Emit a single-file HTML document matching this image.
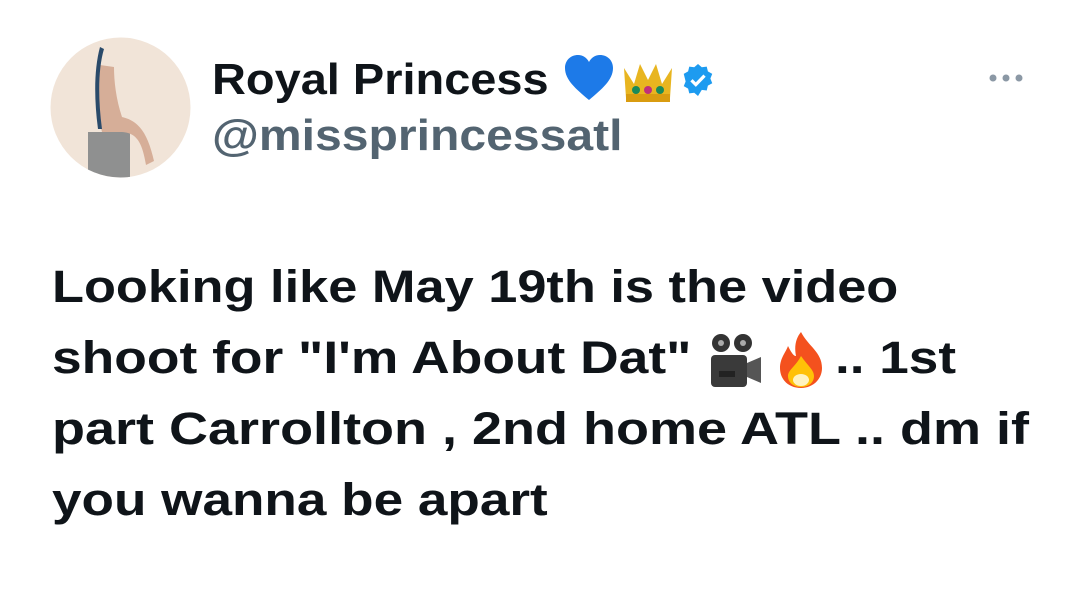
<!DOCTYPE html>
<html><head><meta charset="utf-8"><style>
html,body{margin:0;padding:0;background:#fff;width:1080px;height:602px;overflow:hidden;position:relative;font-family:"Liberation Sans",sans-serif;}
.t{position:absolute;white-space:nowrap;font-weight:bold;line-height:1;color:#0f1419;transform-origin:0 0;}
.b{font-size:45px;left:52px;}
</style></head><body>
<svg style="position:absolute;left:50px;top:37px" width="141" height="141">
<defs><clipPath id="c"><circle cx="70.5" cy="70.5" r="70"/></clipPath></defs>
<g clip-path="url(#c)">
<rect width="141" height="141" fill="#f1e4d8"/>
<rect x="38" y="95" width="42" height="50" fill="#8f9090"/>
<path d="M50 28 C46 48 46 72 52 95 L72 95 C86 96 92 104 96 128 L104 124 C98 98 90 84 72 80 C66 62 64 44 64 30 Z" fill="#d6ae98"/>
<path d="M50 10 C44 32 44 62 48 92 L52 92 C48 62 48 32 54 12 Z" fill="#2a4a6a"/>
</g></svg>
<div class="t" style="left:212px;top:58px;font-size:44px;transform:scaleX(1.067)">Royal Princess</div>
<svg style="position:absolute;left:564px;top:55px" width="50" height="46" viewBox="0 0 50 46"><path d="M25 45 C12 34 1 25 1 13 C1 5 7 0 14 0 C19 0 23 3 25 7 C27 3 31 0 36 0 C43 0 49 5 49 13 C49 25 38 34 25 45Z" fill="#1d7ae8"/></svg>
<svg style="position:absolute;left:620px;top:60px" width="56" height="44" viewBox="0 0 56 44"><path d="M4 8 L14 24 L20 4 L28 20 L36 4 L42 24 L52 8 L50 38 L6 38Z" fill="#e8b520"/><rect x="6" y="34" width="44" height="8" fill="#d99c10"/><circle cx="16" cy="30" r="4" fill="#1a8a5a"/><circle cx="28" cy="30" r="4" fill="#c0307a"/><circle cx="40" cy="30" r="4" fill="#1a8a5a"/></svg>
<svg style="position:absolute;left:682px;top:64px" width="32" height="32" viewBox="0 0 22 22"><path d="M11 0l2.6 2.2 3.4-.4.8 3.3 3 1.7-1.3 3.2 1.3 3.2-3 1.7-.8 3.3-3.4-.4L11 22l-2.6-2.2-3.4.4-.8-3.3-3-1.7 1.3-3.2L1.2 6.8l3-1.7.8-3.3 3.4.4Z" fill="#1d9bf0"/><path d="M6.5 11.2l3 3 6-6.2" stroke="#fff" stroke-width="2.2" fill="none"/></svg>
<div class="t" style="left:212px;top:114px;font-size:44px;color:#536471;transform:scaleX(1.093)">@missprincessatl</div>
<svg style="position:absolute;left:988px;top:73px" width="40" height="10"><circle cx="5" cy="5" r="3.5" fill="#8b98a5"/><circle cx="18" cy="5" r="3.5" fill="#8b98a5"/><circle cx="31" cy="5" r="3.5" fill="#8b98a5"/></svg>
<div class="t b" style="top:264px;transform:scaleX(1.163)">Looking like May 19th is the video</div>
<div class="t b" style="top:335px;transform:scaleX(1.186)">shoot for "I'm About Dat"</div>
<svg style="position:absolute;left:705px;top:333px" width="58" height="55" viewBox="0 0 58 55"><circle cx="16" cy="10" r="9" fill="#333"/><circle cx="38" cy="10" r="9" fill="#333"/><circle cx="16" cy="10" r="3" fill="#aaa"/><circle cx="38" cy="10" r="3" fill="#aaa"/><rect x="6" y="22" width="36" height="32" rx="4" fill="#3a3a3a"/><path d="M42 30 L56 24 L56 50 L42 44Z" fill="#555"/><rect x="14" y="38" width="16" height="6" fill="#222"/></svg>
<svg style="position:absolute;left:778px;top:332px" width="46" height="56" viewBox="0 0 46 56"><path d="M23 0 C30 14 44 20 44 36 C44 48 34 56 23 56 C11 56 2 48 2 36 C2 26 8 20 10 14 C14 22 16 24 18 24 C16 14 18 6 23 0Z" fill="#f4511e"/><path d="M23 24 C30 34 36 38 36 44 C36 51 30 55 23 55 C16 55 10 51 10 44 C10 38 18 34 23 24Z" fill="#ffc107"/><ellipse cx="23" cy="48" rx="8" ry="6" fill="#fff3c0"/></svg>
<div class="t b" style="top:335px;left:835px;transform:scaleX(1.18)">.. 1st</div>
<div class="t b" style="top:406px;transform:scaleX(1.2)">part Carrollton , 2nd home ATL .. dm if</div>
<div class="t b" style="top:477px;transform:scaleX(1.18)">you wanna be apart</div>
</body></html>
